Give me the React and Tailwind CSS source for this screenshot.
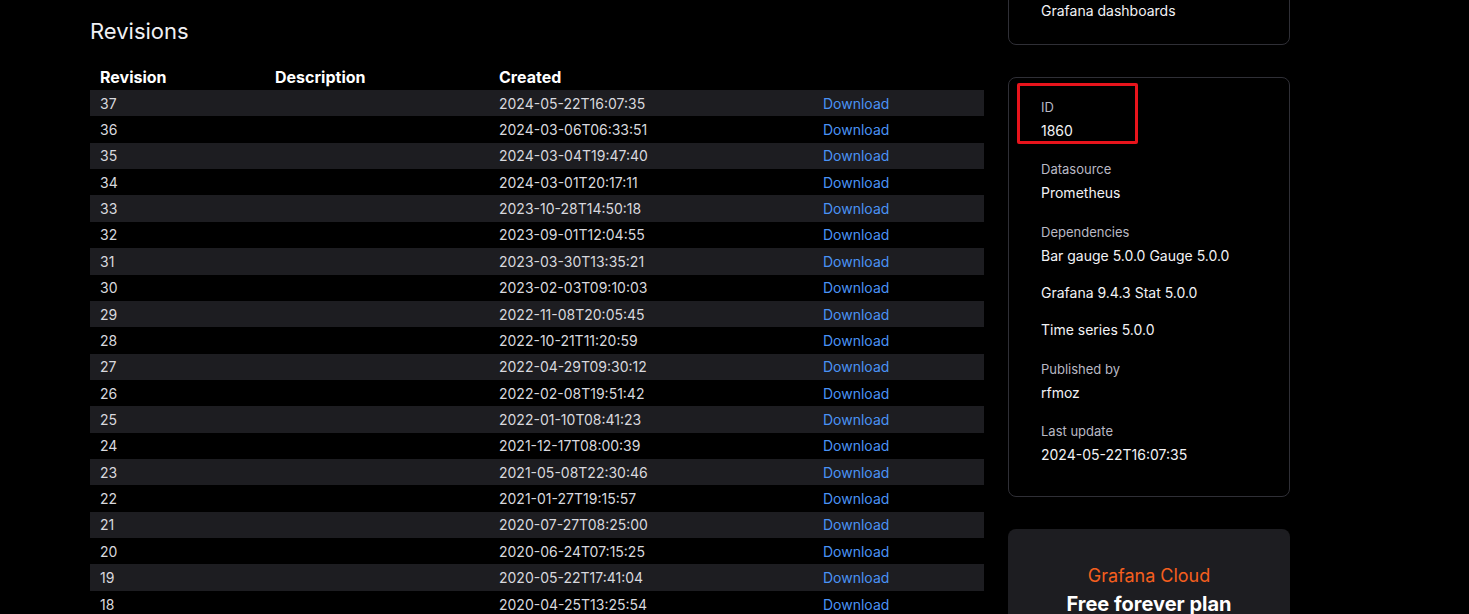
const revisions = [
  ['37', '2024-05-22T16:07:35'],
  ['36', '2024-03-06T06:33:51'],
  ['35', '2024-03-04T19:47:40'],
  ['34', '2024-03-01T20:17:11'],
  ['33', '2023-10-28T14:50:18'],
  ['32', '2023-09-01T12:04:55'],
  ['31', '2023-03-30T13:35:21'],
  ['30', '2023-02-03T09:10:03'],
  ['29', '2022-11-08T20:05:45'],
  ['28', '2022-10-21T11:20:59'],
  ['27', '2022-04-29T09:30:12'],
  ['26', '2022-02-08T19:51:42'],
  ['25', '2022-01-10T08:41:23'],
  ['24', '2021-12-17T08:00:39'],
  ['23', '2021-05-08T22:30:46'],
  ['22', '2021-01-27T19:15:57'],
  ['21', '2020-07-27T08:25:00'],
  ['20', '2020-06-24T07:15:25'],
  ['19', '2020-05-22T17:41:04'],
  ['18', '2020-04-25T13:25:54'],
]

function Field({ label, children, className = 'mb-[15px]' }) {
  return (
    <div className={className}>
      <div className="text-[13px] leading-[20px] text-[#b9b9c4]">{label}</div>
      {children}
    </div>
  )
}

function Value({ children, className = '' }) {
  return <div className={`text-[14px] leading-[28px] text-[#f2f2f5] ${className}`}>{children}</div>
}

export default function App() {
  return (
    <div className="min-h-screen overflow-hidden bg-black font-['Inter','Liberation_Sans',sans-serif] text-[#d8d8de]">
      <div className="flex gap-6 pl-[90px]">
        <div className="w-[894px] shrink-0">
          <h2 className="pt-[17px] text-[22px] leading-[28px] text-[#f0f0f3]">Revisions</h2>
          <table className="mt-[18px] w-full table-fixed border-collapse text-[14px]">
            <colgroup>
              <col className="w-[175px]" />
              <col className="w-[224px]" />
              <col className="w-[324px]" />
              <col />
            </colgroup>
            <thead>
              <tr className="h-[27px] text-left text-[16px] font-bold leading-[24px] text-white">
                <th className="px-[10px]">Revision</th>
                <th className="px-[10px]">Description</th>
                <th className="px-[10px]">Created</th>
                <th className="px-[10px]"></th>
              </tr>
            </thead>
            <tbody>
              {revisions.map(([rev, date], i) => (
                <tr key={rev} className={`h-[26.37px] ${i % 2 === 0 ? 'bg-[#1d1d21]' : 'bg-black'}`}>
                  <td className="px-[10px]">{rev}</td>
                  <td className="px-[10px]"></td>
                  <td className="px-[10px]">{date}</td>
                  <td className="px-[10px]">
                    <a href="#" className="text-[#4a93f5]">Download</a>
                  </td>
                </tr>
              ))}
            </tbody>
          </table>
        </div>

        <div className="w-[282px] shrink-0">
          <div className="-mt-[30px] rounded-lg border border-[#2f2f36] px-8 pt-[26px] pb-[19px]">
            <div className="text-[14px] leading-[28px] text-[#f2f2f5]">Grafana dashboards</div>
          </div>

          <div className="relative mt-8 rounded-lg border border-[#2f2f36] px-8 pt-[19px] pb-[27px]">
            <div className="absolute left-[8px] top-[5px] h-[61px] w-[121px] rounded-[2px] border-[3px] border-[#e8141c]" />
            <Field label="ID" className="mb-[14px]">
              <Value>1860</Value>
            </Field>
            <Field label="Datasource">
              <Value>Prometheus</Value>
            </Field>
            <Field label="Dependencies">
              <Value>Bar gauge 5.0.0 Gauge 5.0.0</Value>
              <Value className="mt-[9px]">Grafana 9.4.3 Stat 5.0.0</Value>
              <Value className="mt-[9px]">Time series 5.0.0</Value>
            </Field>
            <Field label="Published by" className="mb-[14px]">
              <Value>rfmoz</Value>
            </Field>
            <Field label="Last update" className="mb-0">
              <Value>2024-05-22T16:07:35</Value>
            </Field>
          </div>

          <div className="mt-8 rounded-lg bg-[#1d1d21] px-8 pt-[35px] pb-10 text-center">
            <div className="text-[18px] leading-[24px] text-[#f55f1e]">Grafana Cloud</div>
            <div className="mt-[2px] text-[20px] font-bold leading-[28px] text-white">Free forever plan</div>
          </div>
        </div>
      </div>
    </div>
  )
}
